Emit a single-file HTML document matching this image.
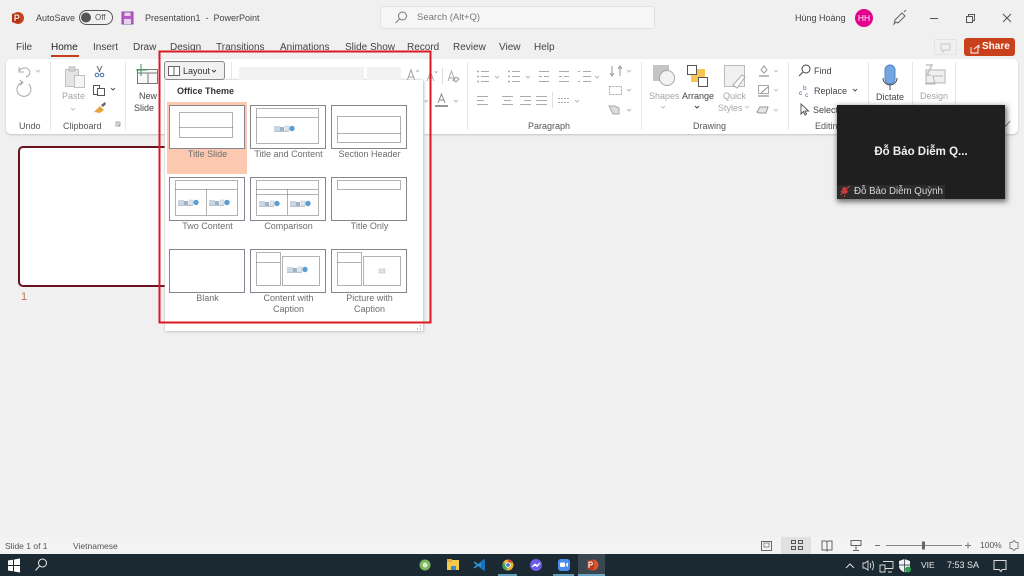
<!DOCTYPE html>
<html lang="vi">
<head>
<meta charset="utf-8">
<title>Presentation1 - PowerPoint</title>
<style>
html,body{margin:0;padding:0;width:1024px;height:576px;overflow:hidden;background:#f0f0f0}
body{position:relative;font-family:"Liberation Sans","Noto Sans CJK SC",sans-serif;color:#3a3a3a;filter:blur(.3px)}
.a{position:absolute}
.t{position:absolute;white-space:nowrap;font-size:9px;line-height:12px;color:#444}
.c{text-align:center}
.g{color:#a6a6a6}
.tab{font-size:10px;color:#444;top:42px}
.lab{color:#555;font-size:9px;text-align:center}
.tile{position:absolute;width:74px;height:42px;border:1px solid #85858d;background:#fff}
.lay{position:absolute;width:81px;text-align:center;font-size:9px;line-height:11px;color:#6e6e6e}
svg{position:absolute;left:0;top:0}
</style>
</head>
<body>
<!-- Ribbon and main surfaces -->
<div class="a" style="left:6px;top:59px;width:1012px;height:75px;background:#fff;border-radius:5px;box-shadow:0 1px 2px #c4c4c4"></div>
<div class="a" style="left:0;top:537px;width:1024px;height:17px;background:#f3f3f3"></div>
<div class="a" style="left:0;top:554px;width:1024px;height:22px;background:#1b2a32"></div>
<div class="a" style="left:380px;top:6px;width:275px;height:23px;background:#f6f6f6;border:1px solid #e2e2e2;border-radius:3px;box-sizing:border-box"></div>
<div class="a" style="left:964px;top:38px;width:51px;height:18px;background:#c8401c;border-radius:3px"></div>
<div class="a" style="left:934px;top:39px;width:23px;height:16px;border:1px solid #e3e3e3;border-radius:2px;box-sizing:border-box"></div>
<div class="a" style="left:855px;top:9px;width:18px;height:18px;background:#e3008c;border-radius:50%"></div>

<!-- Slide thumbnail -->
<div class="a" style="left:18px;top:146px;width:165px;height:141px;box-sizing:border-box;background:#fff;border:2px solid #6b1420;border-radius:5px"></div>
<div class="t" style="left:21px;top:290px;font-size:11px;line-height:14px;color:#c47058">1</div>

<!-- Title bar text -->
<div class="t" style="left:36px;top:12px;font-size:9px">AutoSave</div>
<div class="t" style="left:95px;top:12px;font-size:8px;color:#555">Off</div>
<div class="t" style="left:145px;top:12px;font-size:9px">Presentation1&nbsp; -&nbsp; PowerPoint</div>
<div class="t" style="left:417px;top:12px;font-size:9.5px;color:#777">Search (Alt+Q)</div>
<div class="t" style="left:795px;top:12px;font-size:9px">Hùng Hoàng</div>
<div class="t" style="left:855px;top:12px;width:18px;text-align:center;font-size:8.5px;color:#fff">HH</div>
<div class="t" style="left:982px;top:41px;font-size:10px;font-weight:bold;color:#fff">Share</div>

<!-- Tabs -->
<div class="t tab" style="left:16px">File</div>
<div class="t tab" style="left:51px;color:#222">Home</div>
<div class="a" style="left:51px;top:55px;width:28px;height:2px;background:#c43e1c"></div>
<div class="t tab" style="left:93px">Insert</div>
<div class="t tab" style="left:133px">Draw</div>
<div class="t tab" style="left:170px">Design</div>
<div class="t tab" style="left:216px">Transitions</div>
<div class="t tab" style="left:280px">Animations</div>
<div class="t tab" style="left:345px">Slide Show</div>
<div class="t tab" style="left:407px">Record</div>
<div class="t tab" style="left:453px">Review</div>
<div class="t tab" style="left:499px">View</div>
<div class="t tab" style="left:534px">Help</div>

<!-- Ribbon labels -->
<div class="t g" style="left:62px;top:90px;font-size:9px">Paste</div>
<div class="t" style="left:139px;top:90px;font-size:9px">New</div>
<div class="t" style="left:134px;top:102px;font-size:9px">Slide</div>
<div class="t lab" style="left:19px;top:120px">Undo</div>
<div class="t lab" style="left:63px;top:120px">Clipboard</div>
<div class="t lab" style="left:528px;top:120px">Paragraph</div>
<div class="t lab" style="left:693px;top:120px">Drawing</div>
<div class="t lab" style="left:815px;top:120px">Editing</div>
<div class="t g" style="left:649px;top:90px;font-size:9px">Shapes</div>
<div class="t" style="left:682px;top:90px;font-size:9px">Arrange</div>
<div class="t g" style="left:723px;top:90px;font-size:9px">Quick</div>
<div class="t g" style="left:718px;top:102px;font-size:9px">Styles</div>
<div class="t" style="left:814px;top:65px;font-size:9px">Find</div>
<div class="t" style="left:814px;top:85px;font-size:9px">Replace</div>
<div class="t" style="left:813px;top:104px;font-size:9px">Select</div>
<div class="t" style="left:876px;top:91px;font-size:9px">Dictate</div>
<div class="t g" style="left:920px;top:90px;font-size:9px">Design</div>

<!-- Status bar text -->
<div class="t" style="left:5px;top:540px;font-size:8.5px;color:#555">Slide 1 of 1</div>
<div class="t" style="left:73px;top:540px;font-size:8.5px;color:#555">Vietnamese</div>
<div class="t" style="left:980px;top:539px;font-size:8.5px;color:#555">100%</div>

<!-- Taskbar text -->
<div class="t" style="left:921px;top:559px;font-size:8.5px;color:#e8e8e8">VIE</div>
<div class="t" style="left:947px;top:559px;font-size:9px;color:#e8e8e8">7:53 SA</div>

<!-- Main icon layer below the popup -->
<svg width="1024" height="576" viewBox="0 0 1024 576" fill="none">
  <!-- PowerPoint logo -->
  <circle cx="18" cy="18" r="6" fill="#c8421e"/><rect x="12" y="13.500" width="8" height="9" rx="1" fill="#b0310f"/>
  <path d="M15 21v-6h2.200a1.600 1.600 0 0 1 0 3.400H15" stroke="#fff" stroke-width="1.100"/>
  <!-- Toggle -->
  <rect x="79.500" y="10.500" width="33" height="14" rx="7" stroke="#555"/>
  <circle cx="86" cy="17.500" r="5" fill="#555"/>
  <!-- Save icon -->
  <path d="M122 12h11v12h-11z" fill="#b65bc4" stroke="#8e4ba0"/><rect x="124.500" y="12.500" width="6" height="3.500" fill="#ead0ef"/><rect x="124" y="19" width="7" height="5" fill="#ead0ef"/>
  <!-- Search icon -->
  <circle cx="402.500" cy="16" r="4" stroke="#777"/><path d="M399.500 19l-4 4" stroke="#777"/>
  <!-- Pen, window controls -->
  <path d="M896 22l-2 2 1-4 7-7 3 3-7 7zM904 12l2-2" stroke="#666"/>
  <path d="M930 18.500h8" stroke="#555"/>
  <rect x="966.500" y="16.500" width="6" height="6" stroke="#555"/><path d="M968.500 16.500v-2h6v6h-2" stroke="#555"/>
  <path d="M1003 14l8 8M1011 14l-8 8" stroke="#555"/>
  <!-- Comment icon -->
  <path d="M941 44h9v6h-5l-2 2v-2h-2z" stroke="#c8c8c8"/>
  <!-- Share icon -->
  <path d="M971 47v6h7v-6M974 49l5-4M979 45v3" stroke="#fff" stroke-width=".9"/>

  <!-- Undo -->
  <path d="M19 67v5h5M19 71c3-4 8-4 10-1s0 6-3 7" stroke="#a8a8a8"/>
  <path d="M36 70l2 2 2-2" stroke="#bbb"/>
  <path d="M28.500 84a7 7 0 1 1-6-1.500M19.500 80l3.500 2.500-3 3" stroke="#a8a8a8"/>
  <path d="M50.500 62v68M125.500 62v68M231.500 62v68M467.500 62v68M641.500 62v68M788.500 62v68M868.500 62v68M912.500 62v68M955.500 62v68" stroke="#e6e6e6"/>
  <!-- Clipboard -->
  <rect x="65.500" y="69.500" width="13" height="17" fill="#e4e4e4" stroke="#c0c0c0"/><rect x="69" y="67" width="6" height="4" fill="#d5d5d5" stroke="#bcbcbc"/>
  <rect x="74.500" y="75.500" width="10" height="12" fill="#f5f5f5" stroke="#c0c0c0"/>
  <path d="M71 108l2 2 2-2" stroke="#c4c4c4"/>
  <path d="M97 66l3 6M102 66l-3 6" stroke="#666"/><circle cx="97" cy="75" r="1.800" stroke="#3f6fa8"/><circle cx="102" cy="75" r="1.800" stroke="#3f6fa8"/>
  <rect x="93.500" y="85.500" width="6" height="9" stroke="#555"/><rect x="97.500" y="88.500" width="7" height="7" fill="#fff" stroke="#555"/>
  <path d="M111 88l2 2 2-2" stroke="#555"/>
  <path d="M94 112l6-6 4 4-4 3z" fill="#e8a33d"/><path d="M101 105l4-3 1 2-3 3z" fill="#666"/>
  <path d="M116 122h4v4h-4zM117 123l3 3" stroke="#888" stroke-width=".7"/>
  <!-- New slide -->
  <rect x="137.500" y="69.500" width="20" height="14" fill="#f8f8f8" stroke="#777"/><path d="M137.500 73h20M148 73v11" stroke="#777"/>
  <path d="M141 64v12M136 70h11" stroke="#3f9a52"/>
  <!-- Font group leftovers -->
  <path d="M407 81l4-11 4 11M408.500 77h5" stroke="#a0a0a0"/><path d="M416 72l1.500-2 1.500 2" stroke="#b0b0b0" stroke-width=".8"/>
  <path d="M427 81l3.500-9 3.500 9M428.500 78h4" stroke="#b0b0b0"/><path d="M434.500 71l1.500 2 1.500-2" stroke="#b0b0b0" stroke-width=".8"/>
  <path d="M442.500 68v16" stroke="#dcdcdc"/>
  <path d="M448 81l3.500-10 3.500 10M449 78h5" stroke="#aaa"/><path d="M453 80l3-3 3 2-3 3z" stroke="#999"/>
  <path d="M435 106h13" stroke="#888" stroke-width="1.800"/><path d="M438 103l3.500-9 3.500 9M439.500 100h4" stroke="#888"/>
  <path d="M454 100l2 2 2-2M424 100l2 2 2-2" stroke="#bbb"/>
  <!-- Para icons -->
  <g stroke="#ababab">
    <path d="M477 71.500h2M477 76.500h2M477 81.500h2" stroke-width="1.600"/><path d="M481 71.500h8M481 76.500h8M481 81.500h8"/>
    <path d="M508 71.500h2M508 76.500h2M508 81.500h2" stroke-width="1.600"/><path d="M512 71.500h8M512 76.500h8M512 81.500h8"/>
    <path d="M539 71.500h10M544 76.500h5M539 81.500h10M539 76.500h3"/>
    <path d="M559 71.500h10M564 76.500h5M559 81.500h10M559 76.500h3"/>
    <path d="M578 71.500h2M578 81.500h2M583 71.500h8M583 76.500h8M583 81.500h8"/>
    <path d="M477 96.500h11M477 100.500h7M477 104.500h11"/>
    <path d="M502 96.500h11M504 100.500h7M502 104.500h11"/>
    <path d="M520 96.500h11M524 100.500h7M520 104.500h11"/>
    <path d="M536 96.500h11M536 100.500h11M536 104.500h11"/>
    <path d="M558 98.500h11M558 102.500h11" stroke-dasharray="2 1"/>
    <path d="M552.500 92v16" stroke="#e0e0e0"/>
  </g>
  <path d="M495 76l2 2 2-2M526 76l2 2 2-2M595 76l2 2 2-2M575 100l2 2 2-2M627 70l2 2 2-2M627 89l2 2 2-2M627 109l2 2 2-2" stroke="#bbb"/>
  <path d="M612 66v9M620 67v9M610 73l2 3 2-3M618 69l2-3 2 3" stroke="#999"/>
  <rect x="609.500" y="86.500" width="12" height="8" stroke="#a8a8a8" stroke-dasharray="2 1"/>
  <path d="M609 106h6l4 2v6h-6z" fill="#ddd" stroke="#aaa"/>
  <!-- Shapes -->
  <rect x="653" y="65" width="16" height="16" fill="#c4c4c4"/><circle cx="667" cy="78" r="7.500" fill="#f3f3f3" stroke="#a8a8a8"/>
  <path d="M661 106l2 2 2-2" stroke="#c4c4c4"/>
  <!-- Arrange -->
  <rect x="691" y="69" width="14" height="13" fill="#f6c453"/>
  <rect x="687.500" y="65.500" width="9" height="9" fill="#fff" stroke="#555"/>
  <rect x="698.500" y="77.500" width="9" height="9" fill="#fff" stroke="#555"/>
  <path d="M695 106l2 2 2-2" stroke="#444"/>
  <!-- Quick styles -->
  <rect x="724.500" y="65.500" width="20" height="21" fill="#f0f0f0" stroke="#bbb"/>
  <path d="M733 85l9-10 3 2-8 11z" fill="#fff" stroke="#aaa"/>
  <path d="M745 106l2 2 2-2" stroke="#c4c4c4"/>
  <path d="M759 76h10" stroke="#bbb" stroke-width="2"/><path d="M761 70l3-4 3 4-3 3z" stroke="#999"/>
  <path d="M758 96h11" stroke="#bbb" stroke-width="2"/><rect x="758.500" y="85.500" width="10" height="8" stroke="#aaa"/><path d="M761 93l7-6" stroke="#888"/>
  <path d="M757 112l3-5h8l-2 6h-7z" fill="#e4e4e4" stroke="#999"/>
  <path d="M774 70l2 2 2-2M774 89l2 2 2-2M774 109l2 2 2-2" stroke="#c4c4c4"/>
  <!-- Editing -->
  <circle cx="806" cy="69" r="4" stroke="#444"/><path d="M803 72l-4 4" stroke="#444"/>
  <text x="803" y="90" font-family="Liberation Sans" font-size="6.500" fill="#3f6fa8">b</text>
  <text x="799" y="95" font-family="Liberation Sans" font-size="6.500" fill="#555">c</text>
  <text x="805" y="97" font-family="Liberation Sans" font-size="6.500" fill="#3f6fa8">c</text>
  <path d="M853 89l2 2 2-2" stroke="#555"/>
  <path d="M801 104l0 10 2.500-2.500 1.500 3.500 1.500-1-1.500-3h3.500z" fill="#fff" stroke="#555"/>
  <!-- Dictate -->
  <rect x="885" y="65" width="10" height="19" rx="5" fill="#74a7e0" stroke="#4d84c4"/>
  <path d="M883 78a7 7 0 0 0 14 0M890 85v5" stroke="#444"/>
  <!-- Design ideas -->
  <rect x="926" y="70" width="19" height="13" fill="#efefef" stroke="#b5b5b5"/>
  <path d="M925 84h10l-2-8h10" stroke="#b5b5b5"/><path d="M926 65h6l-5 10h4" stroke="#c2c2c2" stroke-width="1.500"/>
  <path d="M1003 123l3 3 4-5" stroke="#777"/>
  <!-- Status bar icons -->
  <rect x="761.500" y="541.500" width="10" height="9" stroke="#666"/><rect x="764" y="543" width="5" height="4" stroke="#666" stroke-width=".7"/>
  <rect x="781" y="537" width="30" height="17" fill="#e1e1e1"/>
  <g stroke="#555"><rect x="791.500" y="540.500" width="4" height="3"/><rect x="798.500" y="540.500" width="4" height="3"/><rect x="791.500" y="546.500" width="4" height="3"/><rect x="798.500" y="546.500" width="4" height="3"/></g>
  <path d="M822 541h4l1 1 1-1h4v9h-4l-1 1-1-1h-4zM827 542v8" stroke="#666"/>
  <path d="M851 540.500h10v5h-10zM856 546v4M853 550.500h6" stroke="#666"/>
  <path d="M875 545.500h5" stroke="#777"/><path d="M886 545.500h76" stroke="#888"/>
  <rect x="922" y="541.500" width="3" height="8" fill="#666"/>
  <path d="M965 545.500h6M968 542.500v6" stroke="#777"/>
  <path d="M1014 540.500l2 2h2v6h-2l-2 2-2-2h-2v-6h2z" stroke="#666" opacity=".8"/>
  <!-- Taskbar: windows and search -->
  <path d="M8 560.500l5-.8v5.300h-5zM14 559.500l6-1v6.500h-6zM8 566h5v5.300l-5-.8zM14 566h6v6.500l-6-1z" fill="#fff"/>
  <circle cx="42.500" cy="563" r="4" stroke="#eee"/><path d="M39.500 566l-4 4.500" stroke="#eee"/>
  <!-- Taskbar apps -->
  <rect x="578" y="554" width="27" height="22" fill="#3a4750"/>
  <circle cx="425" cy="565" r="5.500" fill="#7bb661"/><circle cx="425" cy="565" r="2.500" fill="#dfeccf"/>
  <rect x="447" y="560" width="12" height="10" fill="#f4c94f"/><rect x="447" y="559" width="5" height="3" fill="#e0a93a"/><rect x="451" y="566" width="5" height="4" fill="#3a8ad0"/>
  <path d="M485 559l-7 5-3-2.500-1.500 1 3 2.500-3 2.500 1.500 1 3-2.500 7 5z" fill="#2f93d8"/><path d="M485 559v12l-4-2v-8z" fill="#1c6fb5"/>
  <circle cx="508" cy="565" r="5.500" fill="#e4b634"/><path d="M508 559.500a5.500 5.500 0 0 1 5 3h-5z" fill="#d9483b"/><path d="M503 562.500a5.500 5.500 0 0 0 3 8l2-4z" fill="#4aa05a"/><circle cx="508" cy="565" r="2.300" fill="#3b7fd4" stroke="#fff" stroke-width=".8"/>
  <circle cx="536" cy="565" r="6" fill="#6d5ce8"/><path d="M532 567l3-3 2 1.500 3-2.500-3 3.500-2-1.500z" stroke="#fff"/>
  <rect x="558" y="559" width="12" height="12" rx="3" fill="#4a8ef0"/><rect x="560" y="562.500" width="5" height="4.500" rx="1" fill="#fff"/><path d="M566 564l2-1.500v4.500l-2-1.500z" fill="#fff"/>
  <circle cx="593" cy="565" r="5.500" fill="#d9532f"/><rect x="587" y="560.500" width="7" height="9" rx="1" fill="#b73a1b"/>
  <path d="M589 568v-6h1.800a1.500 1.500 0 0 1 0 3H589" stroke="#fff"/>
  <path d="M498 575h19M553 575h21M578 575h27" stroke="#7cc0e8" stroke-width="1.500"/>
  <!-- Tray -->
  <path d="M846 568l4-4 4 4" stroke="#ddd"/>
  <path d="M863 563h2l3-2v9l-3-2h-2zM870 563c1 1 1 4 0 5M872 561c2 2 2 7 0 9" stroke="#ddd" stroke-width=".9"/>
  <path d="M883 561.500h10v7h-8M880 565v7h5v-7zM888 572h4" stroke="#ddd" stroke-width=".9"/>
  <path d="M899 561l5.500-2 5.500 2v5c0 3-2.500 5-5.500 6.500-3-1.500-5.500-3.500-5.500-6.500z" fill="#eef2f4"/><path d="M904.500 559v13.500M899 565h11" stroke="#1b2a32" stroke-width=".7"/><circle cx="908" cy="569.500" r="3" fill="#2f9e50"/>
  <path d="M994 560.500h12v9h-4l-1 2-2-2h-5z" stroke="#ddd"/>
</svg>

<!-- Layout popup -->
<div class="a" style="left:165px;top:80px;width:258px;height:251px;background:#fff;box-shadow:0 0 2px #bcbcbc,1px 1px 3px #cfcfcf"></div>
<div class="a" style="left:164px;top:61px;width:61px;height:19px;box-sizing:border-box;background:#f1f1f1;border:1px solid #8a8a8a;border-radius:3px"></div>
<div class="t" style="left:183px;top:65px;font-size:9px;color:#333">Layout</div>
<div class="a" style="left:239px;top:67px;width:125px;height:13px;background:#f2f2f2"></div>
<div class="a" style="left:367px;top:67px;width:34px;height:13px;background:#f2f2f2"></div>
<div class="t" style="left:177px;top:85px;font-size:9px;font-weight:bold;color:#333">Office Theme</div>

<div class="a" style="left:167px;top:102px;width:80px;height:72px;background:#fcc8b0"></div>
<div class="tile" style="left:169px;top:105px"></div>
<div class="tile" style="left:250px;top:105px"></div>
<div class="tile" style="left:331px;top:105px"></div>
<div class="tile" style="left:169px;top:177px"></div>
<div class="tile" style="left:250px;top:177px"></div>
<div class="tile" style="left:331px;top:177px"></div>
<div class="tile" style="left:169px;top:249px"></div>
<div class="tile" style="left:250px;top:249px"></div>
<div class="tile" style="left:331px;top:249px"></div>

<div class="lay" style="left:167px;top:149px">Title Slide</div>
<div class="lay" style="left:248px;top:149px">Title and Content</div>
<div class="lay" style="left:329px;top:149px">Section Header</div>
<div class="lay" style="left:167px;top:221px">Two Content</div>
<div class="lay" style="left:248px;top:221px">Comparison</div>
<div class="lay" style="left:329px;top:221px">Title Only</div>
<div class="lay" style="left:167px;top:293px">Blank</div>
<div class="lay" style="left:248px;top:293px">Content with<br>Caption</div>
<div class="lay" style="left:329px;top:293px">Picture with<br>Caption</div>

<svg width="1024" height="576" viewBox="0 0 1024 576" fill="none">
  <defs>
    <g id="m">
      <rect x="0" y="1" width="6" height="5" fill="#c9d6e2"/><rect x="6" y="2" width="4" height="4" fill="#9fb3c4"/>
      <rect x="11" y="1" width="4" height="5" fill="#e3e6e8" stroke="#aab4bc" stroke-width=".4"/>
      <circle cx="18" cy="3.500" r="2.700" fill="#5a9ed6"/><rect x="0" y="6" width="15" height="1" fill="#b8c4cf"/>
    </g>
  </defs>
  <!-- Layout button icon -->
  <rect x="168.500" y="66.500" width="11" height="9" fill="#fff" stroke="#666"/><path d="M174 67v8" stroke="#666"/>
  <path d="M212 70l2 2 2-2" stroke="#444"/>
  <g stroke="#666" stroke-width="1" stroke-dasharray="1 1">
    <!-- Title slide -->
    <rect x="179.500" y="112.500" width="53" height="25"/><path d="M179.500 127.500h53"/>
    <!-- Title and content -->
    <rect x="256.500" y="108.500" width="62" height="35"/><path d="M256.500 117.500h62"/>
    <!-- Section header -->
    <rect x="337.500" y="116.500" width="63" height="26"/><path d="M337.500 133.500h63"/>
    <!-- Two content -->
    <rect x="175.500" y="180.500" width="62" height="35"/><path d="M175.500 189.500h62M206.500 189.500v26"/>
    <!-- Comparison -->
    <rect x="256.500" y="180.500" width="62" height="35"/><path d="M256.500 189.500h62M256.500 194.500h62M287.500 189.500v26"/>
    <!-- Title only -->
    <rect x="337.500" y="180.500" width="63" height="9"/>
    <!-- Content with caption -->
    <rect x="256.500" y="252.500" width="24" height="33"/><path d="M256.500 262.500h24"/><rect x="282.500" y="256.500" width="37" height="29"/>
    <!-- Picture with caption -->
    <rect x="337.500" y="252.500" width="24" height="33"/><path d="M337.500 262.500h24"/><rect x="363.500" y="256.500" width="37" height="29"/>
  </g>
  <use href="#m" x="274" y="125"/>
  <use href="#m" x="178" y="199"/><use href="#m" x="209" y="199"/>
  <use href="#m" x="259" y="200"/><use href="#m" x="290" y="200"/>
  <use href="#m" x="287" y="266"/>
  <rect x="379" y="269" width="6" height="4" fill="#e2e2e2" stroke="#b8b8b8" stroke-width=".5"/>
  <!-- Resize grip -->
  <path d="M420 326h1M417 329h1M420 329h1" stroke="#999" stroke-width="1.200"/>
  <!-- Red annotation rectangle -->
  <rect x="159.500" y="51.500" width="271" height="271" stroke="#dc1a22" stroke-width="2"/>
</svg>

<!-- Zoom video panel -->
<div class="a" style="left:837px;top:105px;width:168px;height:94px;background:#1f1f1f;box-shadow:1px 2px 5px 1px rgba(60,60,60,.7)"></div>
<div class="t" style="left:837px;top:145px;width:168px;text-align:center;font-size:11.500px;line-height:15px;font-weight:bold;color:#f0f0f0">Đỗ Bảo Diễm Q...</div>
<div class="a" style="left:837px;top:185px;width:108px;height:14px;background:#2c2c2c"></div>
<div class="t" style="left:854px;top:186px;font-size:9.700px;color:#d8d8d8">Đỗ Bảo Diễm Quỳnh</div>
<svg width="1024" height="576" viewBox="0 0 1024 576" fill="none">
  <rect x="842" y="187" width="5" height="7" rx="2.500" fill="#c0393a"/>
  <path d="M840.500 195l9-9M841 191a4 4 0 0 0 7 0M844.500 195v2" stroke="#c8403f"/>
</svg>
</body>
</html>
